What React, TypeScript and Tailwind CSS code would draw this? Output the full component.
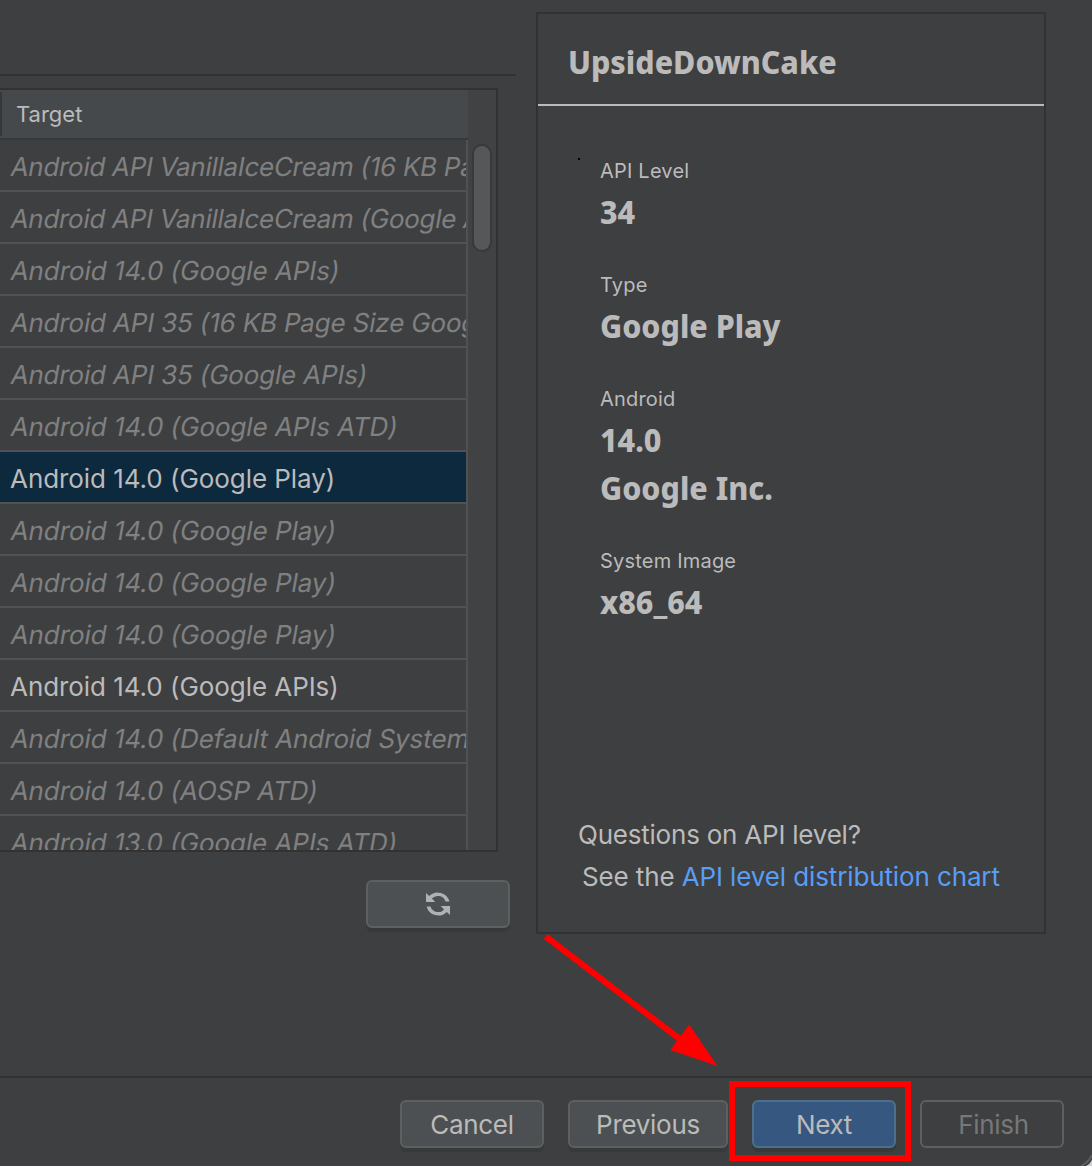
import type { ReactNode } from 'react';

type Target = { name: string; state?: 'installed' | 'selected'; tracking?: string };

const targets: Target[] = [
  { name: 'Android API VanillaIceCream (16 KB Page Size Google APIs)', tracking: 'tracking-[-0.29px]' },
  { name: 'Android API VanillaIceCream (Google APIs)', tracking: 'tracking-[-0.29px]' },
  { name: 'Android 14.0 (Google APIs)' },
  { name: 'Android API 35 (16 KB Page Size Google APIs)', tracking: 'tracking-[-0.17px]' },
  { name: 'Android API 35 (Google APIs)', tracking: 'tracking-[-0.17px]' },
  { name: 'Android 14.0 (Google APIs ATD)' },
  { name: 'Android 14.0 (Google Play)', state: 'selected' },
  { name: 'Android 14.0 (Google Play)' },
  { name: 'Android 14.0 (Google Play)' },
  { name: 'Android 14.0 (Google Play)' },
  { name: 'Android 14.0 (Google APIs)', state: 'installed' },
  { name: 'Android 14.0 (Default Android System Image)' },
  { name: 'Android 14.0 (AOSP ATD)' },
  { name: 'Android 13.0 (Google APIs ATD)' },
];

function Row({ name, state, tracking = 'tracking-[-0.06px]' }: Target) {
  const tone =
    state === 'selected'
      ? 'bg-[#0d293e] text-[#bbbbbb]'
      : state === 'installed'
        ? 'text-[#bbbbbb]'
        : 'text-[#808080]';
  return (
    <div
      className={`h-[52px] shrink-0 overflow-hidden border-b-2 border-[#4f5152] pl-[10px] text-[26px] leading-[54px] whitespace-nowrap ${tracking} ${tone}`}
    >
      <span className={state ? 'inline-block' : 'ml-px inline-block -skew-x-[10deg]'}>{name}</span>
    </div>
  );
}

function Button({ className, children }: { className: string; children: ReactNode }) {
  return (
    <button
      className={`flex h-12 items-center justify-center rounded-[6px] border-2 text-[26px] tracking-[-0.3px] ${className}`}
    >
      {children}
    </button>
  );
}

const normal = 'border-[#5e6060] bg-[#4c5052] text-[#bbbbbb] shadow-[0_4px_0_#37393a]';

function Heading({ children }: { children: ReactNode }) {
  return (
    <span className="inline-block origin-left scale-x-[0.95] font-['Noto_Sans',sans-serif] text-[32px] font-extrabold">
      {children}
    </span>
  );
}

function Detail({ label, values }: { label: string; values: string[] }) {
  return (
    <div className="mb-[42px]">
      <div className="h-6 text-[20px] leading-6 tracking-[0.2px]">{label}</div>
      {values.map((v) => (
        <div key={v} className="h-12 leading-[58px]">
          <Heading>{v}</Heading>
        </div>
      ))}
    </div>
  );
}

function RefreshIcon() {
  return (
    <svg width="24" height="24" viewBox="0 0 24 24" fill="#afb1b3">
      <path d="M0 1v9h9.300L5.900 6.600A8 8 0 0 1 19.500 9.500H23.400A12 12 0 0 0 3.200 4.100Z" />
      <path d="M24 23v-9h-9.300L18.100 17.400A8 8 0 0 1 4.500 14.500H0.600A12 12 0 0 0 20.800 19.900Z" />
    </svg>
  );
}

export default function App() {
  return (
    <div className="relative flex h-[1166px] w-[1092px] flex-col overflow-hidden bg-[#3e3f41] font-['Inter',sans-serif] text-[#bbbbbb]">
      <main className="flex h-[1076px] shrink-0">
        <section className="w-[516px] shrink-0 pt-[74px]">
          <div className="h-[2px] bg-[#323232]" />
          <div className="mt-3 flex h-[764px] w-[498px] overflow-hidden border-y-2 border-r-2 border-[#323232]">
            <div className="flex w-[468px] shrink-0 flex-col">
              <div className="flex h-[50px] shrink-0 items-center border-b-2 border-[#33393c] bg-[#45494b]">
                <div className="h-[44px] w-[2px] bg-[#33383a]" />
                <span className="pl-[14px] text-[22px]">Target</span>
              </div>
              <div className="flex min-h-0 flex-1 flex-col overflow-hidden border-r-2 border-[#4f5152]">
                {targets.map((t, i) => (
                  <Row key={i} {...t} />
                ))}
              </div>
            </div>
            <div className="flex-1 bg-[#414243] pt-[54px] pl-[4px]">
              <div className="h-[108px] w-5 rounded-full border-2 border-[#38393a] bg-[#565758]" />
            </div>
          </div>
          <div className="mt-[28px] flex w-[510px] justify-end">
            <Button className={`w-36 ${normal}`}>
              <RefreshIcon />
            </Button>
          </div>
        </section>
        <section className="mt-3 ml-5 flex h-[922px] w-[510px] shrink-0 flex-col border-2 border-[#323232]">
          <h1 className="h-[92px] shrink-0 border-b-2 border-[#bbbbbb] pl-[30px] leading-[96px]">
            <Heading>UpsideDownCake</Heading>
          </h1>
          <div className="flex-1 pl-10">
            <div className="mt-[52px] h-[2px] w-[2px] bg-black" />
            <div className="-mt-px pl-[22px]">
              <Detail label="API Level" values={['34']} />
              <Detail label="Type" values={['Google Play']} />
              <Detail label="Android" values={['14.0', 'Google Inc.']} />
              <Detail label="System Image" values={['x86_64']} />
            </div>
          </div>
          <div className="h-[118px] pl-10 text-[26px] leading-[42px]">
            <div className="tracking-[-0.22px]">Questions on API level?</div>
            <div className="pl-1 tracking-[-0.12px]">
              See the <a className="text-[#589df6]">API level distribution chart</a>
            </div>
          </div>
        </section>
      </main>
      <footer className="flex h-[90px] shrink-0 items-start border-t-2 border-[#323232] pt-[22px] pl-[400px]">
        <Button className={`w-36 ${normal}`}>Cancel</Button>
        <Button className={`ml-6 w-40 ${normal}`}>Previous</Button>
        <Button className="ml-6 w-36 border-[#4c708c] bg-[#365880] text-[#bbbbbb] shadow-[0_4px_0_#37393a]">Next</Button>
        <Button className="ml-6 w-36 border-[#5e6060] pl-[3px] text-[#777777]">Finish</Button>
      </footer>
      <svg className="pointer-events-none absolute inset-0" width="1092" height="1166" fill="none">
        <path d="M545.700 936.500L681 1040" stroke="#ff0000" strokeWidth="6" />
        <path d="M689.200 1024.500L670.300 1050L717.500 1066Z" fill="#ff0000" />
        <rect x="732" y="1084" width="176" height="74" stroke="#ff0000" strokeWidth="6" />
        <path d="M1092 1160Q1090 1164 1086 1166H1092Z" fill="#d0d0d0" />
        <path d="M1092 1155Q1089 1162 1081 1166" stroke="#5c5d5e" strokeWidth="2" />
      </svg>
    </div>
  );
}
